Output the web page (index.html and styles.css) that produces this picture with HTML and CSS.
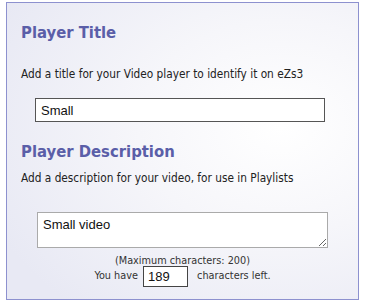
FILE: index.html
```html
<!DOCTYPE html>
<html>
<head>
<meta charset="utf-8">
<link rel="stylesheet" href="styles.css">
</head>
<body>
<div class="panel">
  <h2 class="heading first">Player Title</h2>
  <p class="hint">Add a title for your Video player to identify it on eZs3</p>
  <div class="title-row"><input class="title-input" type="text" value="Small"></div>
  <h2 class="heading second">Player Description</h2>
  <p class="hint hint-desc">Add a description for your video, for use in Playlists</p>
  <div class="desc-row"><textarea class="desc-input">Small video</textarea></div>
  <div class="counter">
    <div class="max">(Maximum characters: 200)</div>
    <div class="left">You have <input class="count" type="text" value="189"> characters left.</div>
  </div>
</div>
</body>
</html>
```
FILE: styles.css
```css
html, body { margin: 0; padding: 0; background: #fff; }
body { width: 365px; height: 307px; overflow: hidden; }
.panel {
  box-sizing: border-box;
  margin: 2px 0 0 6px;
  width: 353px;
  height: 298px;
  border: 1px solid #8d91cf;
  background: radial-gradient(ellipse 90% 80% at 78% 42%, #ffffff 0%, #f6f6fa 45%, #e8e9f4 100%);
  padding: 0 0 0 14px;
  font-family: "DejaVu Sans Condensed", "DejaVu Sans", sans-serif;
  color: #222;
}
.heading {
  margin: 0;
  font-size: 16.5px;
  font-weight: bold;
  color: #5a5ea8;
  line-height: 20px;
}
.heading.first { padding-top: 20px; }
.heading.second { margin-top: 20px; }
.hint {
  margin: 24px 0 0 0;
  font-size: 11.75px;
  line-height: 14px;
}
.hint.hint-desc { margin-top: 9px; }
.title-row { padding: 17px 0 0 14px; }
.title-input {
  box-sizing: border-box;
  width: 290px;
  height: 24px;
  margin: 0;
  border: 1px solid #555;
  padding: 0 5px;
  font-family: "Liberation Sans", Arial, sans-serif;
  font-size: 13px;
  color: #111;
  background: #fff;
}
.desc-row { padding: 27px 0 0 16px; }
.desc-input {
  box-sizing: border-box;
  display: block;
  width: 291px;
  height: 36px;
  margin: 0;
  border: 1px solid #aaa;
  padding: 4px 5px;
  font-family: "Liberation Sans", Arial, sans-serif;
  font-size: 13px;
  color: #111;
  background: #fff;
  resize: vertical;
}
.counter {
  margin-left: -14px;
  text-align: center;
  font-size: 10.8px;
  color: #333;
}
.max { margin-top: 7px; line-height: 12px; }
.left { margin-top: -2px; line-height: 21px; }
.count {
  box-sizing: border-box;
  width: 45px;
  height: 21px;
  margin: 0 6px 0 2px;
  vertical-align: middle;
  border: 1px solid #444;
  padding: 0 4px;
  font-family: "Liberation Sans", Arial, sans-serif;
  font-size: 13px;
  color: #111;
  background: #fff;
}
```
